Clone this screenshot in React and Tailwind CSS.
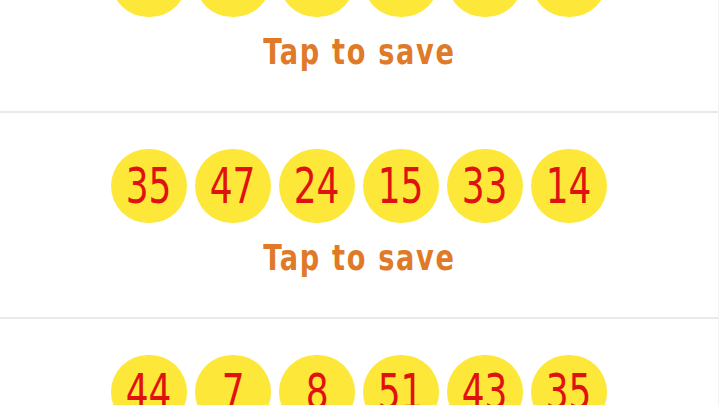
import React from 'react';

const draws = [
  [12, 3, 29, 40, 18, 6],
  [35, 47, 24, 15, 33, 14],
  [44, 7, 8, 51, 43, 35],
];

const Ball = ({ n }) => (
  <div className="w-[76px] h-[74px] rounded-full bg-[#fde83a] flex items-center justify-center">
    <span className="inline-block scale-x-[0.8] text-[50px] leading-none text-[#e0120f] font-['DejaVu_Sans_Condensed','DejaVu_Sans',sans-serif]">
      {n}
    </span>
  </div>
);

const DrawCard = ({ numbers, onSave }) => (
  <button
    onClick={onSave}
    className="w-full flex flex-col items-center pt-[36px] pb-[39px] bg-white border-b-2 border-[#e9e9e9]"
  >
    <div className="flex gap-2">
      {numbers.map((n, i) => (
        <Ball key={i} n={n} />
      ))}
    </div>
    <span className="inline-block scale-x-[0.84] mt-[15px] h-[40px] leading-[40px] text-[36px] font-bold tracking-[2px] text-[#e07a28] font-['DejaVu_Sans_Condensed','DejaVu_Sans',sans-serif]">
      Tap to save
    </span>
  </button>
);

export default function App() {
  return (
    <div className="w-[720px] h-[405px] overflow-hidden bg-white">
      <div className="w-[719px] -mt-[93px] border-r border-[#f3f3f3]">
        {draws.map((d, i) => (
          <DrawCard key={i} numbers={d} onSave={() => {}} />
        ))}
      </div>
    </div>
  );
}
